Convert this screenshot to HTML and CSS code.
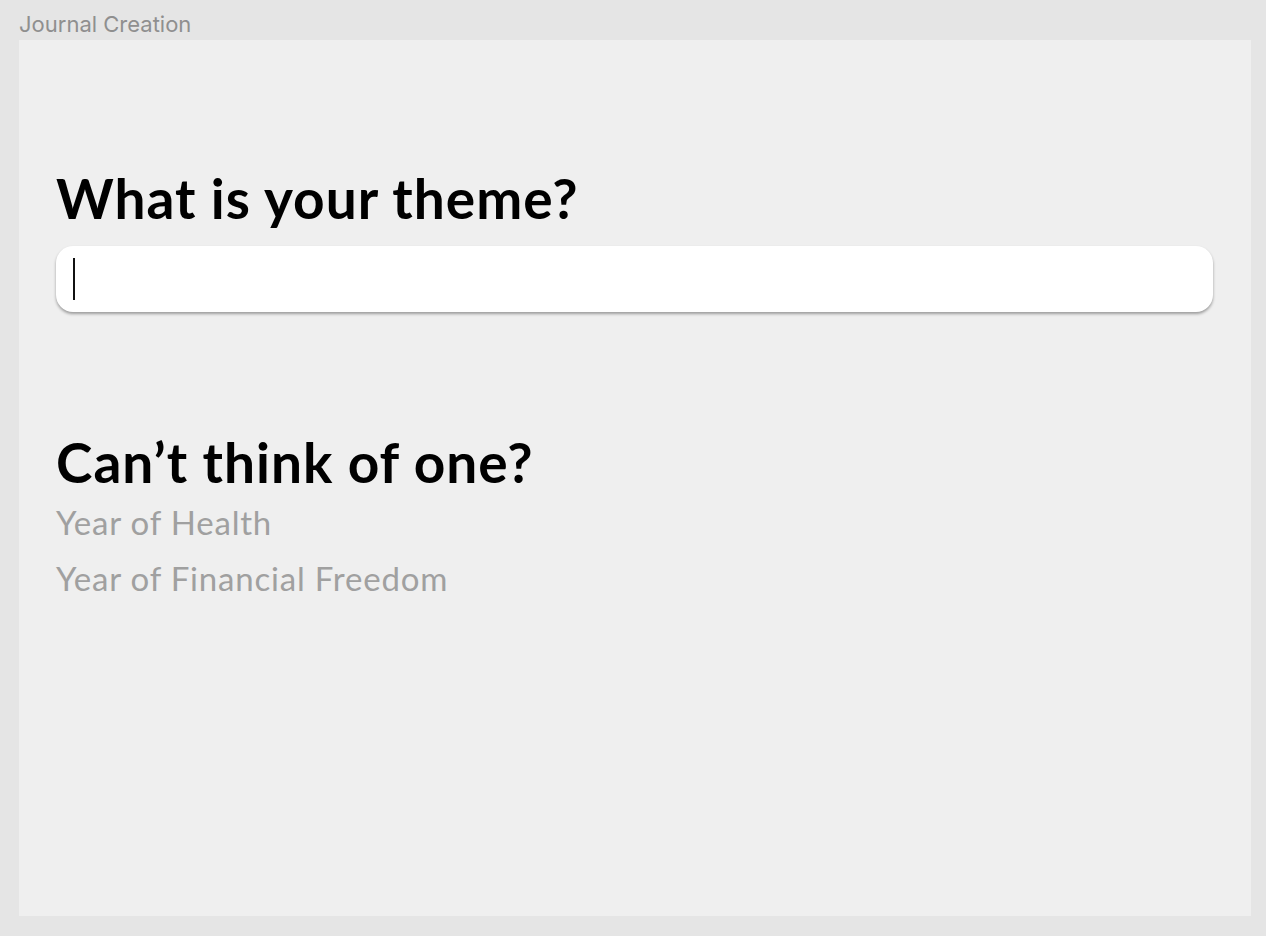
FILE: index.html
```html
<!DOCTYPE html>
<html lang="en">
<head>
<meta charset="utf-8">
<title>Journal Creation</title>
<link rel="stylesheet" href="styles.css">
</head>
<body>
<div class="frame-label">Journal Creation</div>
<main class="frame">
  <section class="theme">
    <h1 class="heading">What is your theme?</h1>
    <div class="input-box"><span class="caret"></span></div>
  </section>
  <section class="suggest">
    <h2 class="heading">Can’t think of one?</h2>
    <ul class="suggest-list">
      <li>Year of Health</li>
      <li>Year of Financial Freedom</li>
    </ul>
  </section>
</main>
</body>
</html>
```
FILE: styles.css
```css
html, body {
  margin: 0;
  padding: 0;
}
body {
  background: #e5e5e5;
  width: 1266px;
  height: 936px;
  overflow: hidden;
}
.frame-label {
  font-family: Inter, "Noto Sans", sans-serif;
  font-size: 22px;
  line-height: 26px;
  color: #8f8f8f;
  padding: 11px 0 3px 19px;
  height: 26px;
}
.frame {
  margin: 0 15px 0 19px;
  height: 876px;
  background: #efefef;
  padding: 126px 37px 0 37px;
  box-sizing: border-box;
}
.heading {
  margin: 0;
  font-family: Lato, "Noto Sans", sans-serif;
  font-weight: 700;
  font-size: 55px;
  letter-spacing: 1px;
  line-height: 64px;
  color: #000;
}
.input-box {
  margin-top: 16px;
  width: 1157px;
  height: 66px;
  background: #fff;
  border-radius: 17px;
  box-shadow: 0 2px 3px rgba(0, 0, 0, 0.35);
  display: flex;
  align-items: center;
  padding-left: 17px;
  box-sizing: border-box;
}
.caret {
  width: 2px;
  height: 42px;
  background: #111;
}
.suggest {
  margin-top: 118px;
}
.suggest-list {
  list-style: none;
  margin: 0;
  padding: 0;
  font-family: Lato, "Noto Sans", sans-serif;
  font-size: 33px;
  letter-spacing: 0.8px;
  line-height: 56px;
  color: #a0a0a0;
}
```
